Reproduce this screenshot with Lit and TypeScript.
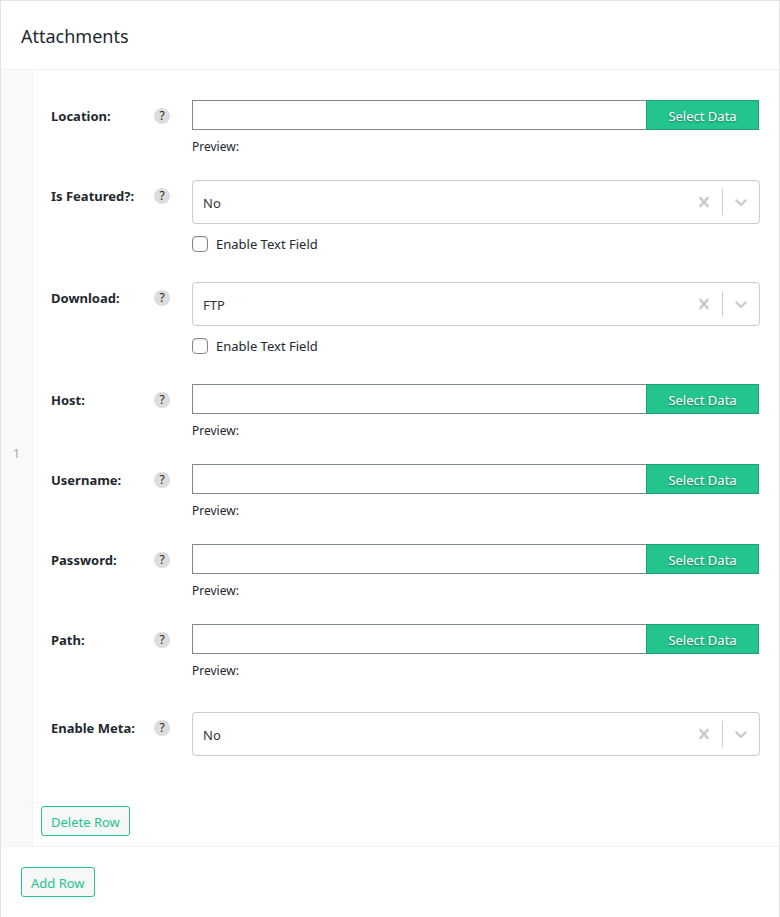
import { LitElement, html, css, nothing } from "lit";
import { customElement, property } from "lit/decorators.js";

type Field = { id: string; label: string; kind: "text" | "select"; value?: string; toggle?: boolean };

const FIELDS: Field[] = [
  { id: "location", label: "Location:", kind: "text" },
  { id: "featured", label: "Is Featured?:", kind: "select", value: "No", toggle: true },
  { id: "download", label: "Download:", kind: "select", value: "FTP", toggle: true },
  { id: "host", label: "Host:", kind: "text" },
  { id: "username", label: "Username:", kind: "text" },
  { id: "password", label: "Password:", kind: "text" },
  { id: "path", label: "Path:", kind: "text" },
  { id: "meta", label: "Enable Meta:", kind: "select", value: "No" },
];

@customElement("field-row")
export class FieldRow extends LitElement {
  @property({ attribute: false }) field!: Field;

  static styles = css`
    :host {
      display: grid;
      grid-template-columns: 103px 38px minmax(0, 1fr);
      align-items: start;
    }
    * { box-sizing: border-box; }
    button, input, select { font: inherit; margin: 0; }
    .label { font-weight: 700; line-height: 20px; margin-top: 6px; }
    .help {
      width: 16px;
      height: 16px;
      margin-top: 8px;
      padding: 0;
      border: 0;
      border-radius: 50%;
      background: #ddd;
      color: #23282d;
      font-size: 12px;
      line-height: 16px;
      text-align: center;
    }
    .group { display: flex; margin-right: 1px; }
    .text {
      flex: 1;
      min-width: 0;
      height: 30px;
      padding: 0 8px;
      border: 1px solid #7e8993;
      border-right: 0;
      border-radius: 0;
      background: #fff;
      outline: 0;
    }
    .pick {
      width: 113px;
      height: 30px;
      padding: 2px 0 0;
      border: 1px solid #239f73;
      background: #24c48f;
      color: #fff;
      line-height: 26px;
      text-shadow: 0 1px 2px rgba(0, 0, 0, 0.4);
    }
    .preview { margin: 7px 0 0; font-size: 12px; line-height: 20px; }
    .box { position: relative; display: flex; }
    .select {
      appearance: none;
      width: 100%;
      height: 44px;
      padding: 2px 80px 0 10px;
      border: 1px solid #ccc;
      border-radius: 4px;
      background: #fff;
      color: #333;
    }
    .tools {
      position: absolute;
      inset: 0 0 0 auto;
      display: flex;
      align-items: center;
      color: #ccc;
      pointer-events: none;
    }
    .clear {
      display: flex;
      width: 36px;
      padding: 8px;
      border: 0;
      background: none;
      color: inherit;
      pointer-events: auto;
    }
    .bar { width: 1px; height: 26px; background: #ccc; }
    .arrow { display: flex; width: 37px; padding: 8px; }
    .icon { width: 20px; height: 20px; fill: currentColor; }
    .clear .icon { stroke: currentColor; stroke-width: 0.4; }
    .toggle { display: flex; align-items: center; gap: 8px; margin-top: 10px; line-height: 20px; }
    .check {
      appearance: none;
      width: 16px;
      height: 16px;
      border: 1px solid #7e8993;
      border-radius: 4px;
      background: #fff;
      box-shadow: inset 0 1px 2px rgba(0, 0, 0, 0.1);
    }
  `;

  private renderText(f: Field) {
    return html`<div>
      <div class="group">
        <input class="text" id=${f.id} type="text" /><button class="pick" type="button">Select Data</button>
      </div>
      <p class="preview">Preview:</p>
    </div>`;
  }

  private renderSelect(f: Field) {
    return html`<div>
      <div class="box">
        <select class="select" id=${f.id}><option>${f.value}</option></select>
        <div class="tools">
          <button class="clear" type="button" aria-label="Clear">
            <svg class="icon" viewBox="0 0 20 20"><path d="M14.348 14.849c-0.469 0.469-1.229 0.469-1.697 0l-2.651-3.030-2.651 3.029c-0.469 0.469-1.229 0.469-1.697 0-0.469-0.469-0.469-1.229 0-1.697l2.758-3.15-2.759-3.152c-0.469-0.469-0.469-1.228 0-1.697s1.228-0.469 1.697 0l2.652 3.031 2.651-3.031c0.469-0.469 1.228-0.469 1.697 0s0.469 1.229 0 1.697l-2.758 3.152 2.758 3.15c0.469 0.469 0.469 1.229 0 1.698z" /></svg>
          </button>
          <span class="bar"></span>
          <span class="arrow">
            <svg class="icon" viewBox="0 0 20 20"><path d="M4.516 7.548c0.436-0.446 1.043-0.481 1.576 0l3.908 3.747 3.908-3.747c0.533-0.481 1.141-0.446 1.574 0 0.436 0.445 0.408 1.197 0 1.615-0.406 0.418-4.695 4.502-4.695 4.502-0.217 0.223-0.502 0.335-0.787 0.335s-0.57-0.112-0.789-0.335c0 0-4.287-4.084-4.695-4.502s-0.436-1.17 0-1.615z" /></svg>
          </span>
        </div>
      </div>
      ${f.toggle
        ? html`<label class="toggle"><input class="check" type="checkbox" />Enable Text Field</label>`
        : nothing}
    </div>`;
  }

  render() {
    const f = this.field;
    return html`
      <label class="label" for=${f.id}>${f.label}</label>
      <button class="help" type="button" aria-label="Help">?</button>
      ${f.kind === "text" ? this.renderText(f) : this.renderSelect(f)}
    `;
  }
}

@customElement("app-root")
export class AppRoot extends LitElement {
  static styles = css`
    :host {
      display: block;
      min-height: 100vh;
      box-sizing: border-box;
      border: 1px solid #e2e4e7;
      border-bottom: 0;
      background: #fff;
      color: #23282d;
      font-family: "Noto Sans", "Open Sans", sans-serif;
      font-size: 13px;
    }
    .title { margin: 0; padding: 21px 20px 19px; font-size: 18px; font-weight: 400; line-height: 28px; }
    .row {
      display: grid;
      grid-template-columns: 32px minmax(0, 1fr);
      border-top: 1px solid #f3f3f3;
      border-bottom: 1px solid #f3f3f3;
    }
    .order {
      display: flex;
      align-items: center;
      justify-content: center;
      padding-bottom: 10px;
      border-right: 1px solid #f3f3f3;
      background: #f9f9f9;
      color: #aaa;
    }
    .fields { display: flex; flex-direction: column; gap: 23px; padding: 30px 19px 50px 18px; }
    .toggled { padding-bottom: 5px; }
    .after-texts { padding-top: 8px; }
    .actions { padding: 0 8px 10px; }
    .footer { padding: 20px; }
    .button {
      height: 30px;
      padding: 2px 9px 0;
      border: 1px solid #24c48f;
      border-radius: 3px;
      background: #f6f7f7;
      color: #24c48f;
      font: inherit;
      line-height: 26px;
      display: block;
    }
  `;

  render() {
    return html`
      <h1 class="title">Attachments</h1>
      <div class="row">
        <div class="order">1</div>
        <div>
          <div class="fields">
            ${FIELDS.map(
              (f) => html`<div class=${f.toggle ? "toggled" : f.kind === "select" ? "after-texts" : "plain"}>
                <field-row .field=${f}></field-row>
              </div>`
            )}
          </div>
          <div class="actions"><button class="button" type="button">Delete Row</button></div>
        </div>
      </div>
      <div class="footer"><button class="button" type="button">Add Row</button></div>
    `;
  }
}
